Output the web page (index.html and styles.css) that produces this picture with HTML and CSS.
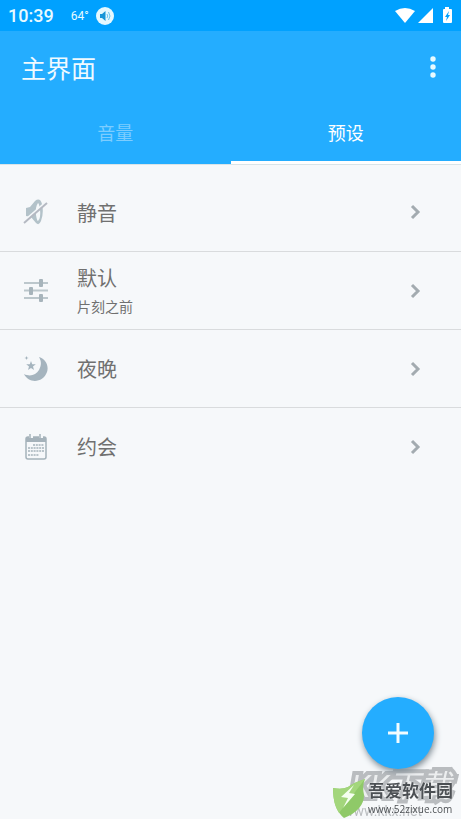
FILE: index.html
```html
<!DOCTYPE html>
<html lang="zh-CN">
<head>
<meta charset="utf-8">
<meta name="viewport" content="width=device-width, initial-scale=1">
<title>主界面</title>
<link rel="stylesheet" href="styles.css">
</head>
<body>
<div class="status">
  <span class="clock">10:39</span>
  <span class="temp">64°</span>
  <svg class="sound" viewBox="0 0 18 18" aria-hidden="true"><circle cx="9" cy="9" r="9" fill="#e4f8ff"/><path d="M4 7h2l3.500-3v10L6 11H4z" fill="#1795d8"/><path d="M11 7q1.500 2 0 4M12.500 5q3 4 0 8" fill="none" stroke="#6cc4ee"/></svg>
  <svg class="signals" viewBox="0 0 60 20" aria-hidden="true"><path d="M1 5Q11-1 21 5L11 17z"/><path d="M39 2v15H24z"/><path fill-rule="evenodd" d="M51 1h4v2h2q1 0 1 1v12q0 1-1 1h-7q-1 0-1-1V4q0-1 1-1h1zM55 5l-4 6h2l-1 4 4-6h-2z"/></svg>
</div>
<header class="header">
  <div class="bar">
    <h1 class="title">主界面</h1>
    <button class="more" aria-label="更多选项"><svg viewBox="0 0 6 22" aria-hidden="true"><circle cx="3" cy="3" r="2.700"/><circle cx="3" cy="11" r="2.700"/><circle cx="3" cy="19" r="2.700"/></svg></button>
  </div>
  <nav class="tabs">
    <a class="tab" href="#volume">音量</a>
    <a class="tab active" href="#presets" aria-current="page">预设</a>
  </nav>
</header>
<main class="content">
  <ul class="list">
    <li class="item"><a class="row" href="#mute">
      <svg class="icon" viewBox="0 0 26 26" aria-hidden="true"><path d="M3 9l4-1 5-6q5-4 7 3 2 9-1 17-2 5-5 2l-5-6-5-1z" fill="#b3c2c9"/><path d="M15 4q-3 4-2 12 1 6 2 6 3-3 2-12-1-6-2-6z" fill="#f5f8fa"/><path d="M1 22L23 3" stroke="#f5f8fa" stroke-width="2"/><path d="M1 24L24 4" stroke="#b5b9c2" stroke-width="2"/></svg>
      <span class="text"><span class="name">静音</span></span>
      <svg class="chevron" viewBox="0 0 12 18" aria-hidden="true"><path d="M2 3l6 6-6 6"/></svg>
    </a></li>
    <li class="item"><a class="row" href="#default">
      <svg class="icon" viewBox="0 0 26 26" aria-hidden="true"><path d="M1 5h24M1 12.500h24M1 20h24" stroke="#bcc7cc" stroke-width="2"/><rect x="16" y="1" width="4" height="8" rx="1" fill="#a7b4bb"/><rect x="6" y="9" width="4" height="8" rx="1" fill="#a7b4bb"/><rect x="16" y="16" width="4" height="8" rx="1" fill="#a7b4bb"/></svg>
      <span class="text"><span class="name">默认</span><span class="note">片刻之前</span></span>
      <svg class="chevron" viewBox="0 0 12 18" aria-hidden="true"><path d="M2 3l6 6-6 6"/></svg>
    </a></li>
    <li class="item"><a class="row" href="#night">
      <svg class="icon" viewBox="0 0 26 26" aria-hidden="true"><g fill="#a5b4be"><path d="M16 1C23 3 26 10 24 16 20 27 6 28 1 18c6 3 12 1 15-4 2-4 3-8 0-13z"/><path d="M8 5l1.200 3.300h3.600L10 10.500l1 3.500-3-2-3 2 1-3.500-2.800-2.200h3.600z"/><path d="M3.500 0l.6 1.400 1.500.6-1.500.6-.6 1.400-.6-1.400L1.400 2l1.500-.6z"/></g></svg>
      <span class="text"><span class="name">夜晚</span></span>
      <svg class="chevron" viewBox="0 0 12 18" aria-hidden="true"><path d="M2 3l6 6-6 6"/></svg>
    </a></li>
    <li class="item"><a class="row" href="#date">
      <svg class="icon" viewBox="0 0 26 26" aria-hidden="true"><rect x="3" y="3" width="20" height="22" rx="2" fill="none" stroke="#a5b2ba" stroke-width="1.500"/><path d="M3 3h20v5H3z" fill="#a5b2ba"/><path d="M8 0v4M18 0v4" stroke="#f5f8fa" stroke-width="4"/><path d="M7 0v4M17 0v4" stroke="#a5b2ba" stroke-width="1.500"/><path d="M10 11h11M5 14h16M5 17h16M5 21h11" stroke="#a5b2ba" stroke-width="1.600" stroke-dasharray="2 .800"/></svg>
      <span class="text"><span class="name">约会</span></span>
      <svg class="chevron" viewBox="0 0 12 18" aria-hidden="true"><path d="M2 3l6 6-6 6"/></svg>
    </a></li>
  </ul>
</main>
<div class="mark-back"><span class="mark-big">KK下载</span><span class="mark-url">www.kkx.net</span></div>
<button class="fab" aria-label="添加预设"><svg viewBox="0 0 22 22" aria-hidden="true"><path d="M11 1v20M1 11h20"/></svg></button>
<div class="mark">
  <svg class="shield" viewBox="0 0 34 40" aria-hidden="true"><path d="M1 9q9 2 15-1 7-5 17-8-3 7-1 16 0 15-20 23Q1 30 1 9z" fill="#8fc968"/><path d="M1 9q9 2 15-1 7-5 17-8L7 34Q1 26 1 9z" fill="#a3d67c"/><path d="M22 6L9 18l7 1-5 10 12-14-6-1z" fill="#f5fff0"/></svg>
  <div class="mark-text"><span class="mark-name">吾爱软件园</span><span class="mark-site">www.52zixue.com</span></div>
</div>
</body>
</html>
```
FILE: styles.css
```css
* { box-sizing: border-box; }
body {
  margin: 0;
  min-height: 100vh;
  background: #f6f8fa;
  color: #707070;
  font-family: Roboto, "Noto Sans CJK SC", sans-serif;
}
a { color: inherit; text-decoration: none; }
button { border: 0; padding: 0; background: none; cursor: pointer; }
svg { display: block; flex: none; }

.status {
  display: flex;
  align-items: center;
  height: 31px;
  padding: 0 7px 0 8px;
  background: #00a1ff;
  color: #e8faff;
}
.clock { font-size: 18px; font-weight: 500; }
.temp { margin-left: 17px; font-size: 12px; }
.sound { width: 18px; height: 18px; margin-left: 7px; }
.signals { width: 60px; height: 20px; margin-left: auto; fill: #fff; }

.header { background: #24adff; color: #fff; }
.bar {
  display: flex;
  align-items: center;
  justify-content: space-between;
  height: 71px;
  padding: 0 16px 0 21px;
}
.title { margin: 0; font-size: 25px; font-weight: 400; color: #f0faff; }
.more { display: flex; justify-content: center; width: 24px; }
.more svg { width: 6px; height: 22px; fill: #e8faff; }
.tabs { display: flex; }
.tab {
  flex: 1;
  height: 62px;
  border-bottom: 3px solid transparent;
  line-height: 64px;
  text-align: center;
  font-size: 18px;
  color: #7dcdff;
}
.tab.active { border-color: #fff; color: #fff; }

.content { border-top: 1px solid #d9e4e8; padding-top: 8px; }
.list { margin: 0; padding: 0; list-style: none; }
.item + .item { border-top: 1px solid #d9dbdd; }
.row {
  display: flex;
  align-items: center;
  height: 78px;
  padding: 0 39px 0 23px;
}
.item + .item .row { height: 77px; }
.icon { width: 26px; height: 26px; }
.text { display: flex; flex: 1; flex-direction: column; margin-left: 28px; padding-top: 3px; }
.name { font-size: 20px; line-height: 30px; }
.note { font-size: 14px; line-height: 26px; }
.chevron { width: 12px; height: 18px; fill: none; stroke: #a3abb0; stroke-width: 3; }

.fab {
  position: fixed;
  right: 27px;
  bottom: 50px;
  display: grid;
  place-items: center;
  width: 72px;
  height: 72px;
  border-radius: 50%;
  background: #24adff;
  box-shadow: 1px 3px 6px #7d8b94;
}
.fab svg { width: 22px; height: 22px; stroke: #f2fcff; stroke-width: 3; }

.mark-back {
  position: fixed;
  right: 2px;
  bottom: 0;
  display: flex;
  flex-direction: column;
  width: 116px;
  color: #eceeef;
}
.mark-big {
  font-size: 31px;
  font-style: italic;
  line-height: 32px;
  text-align: center;
  -webkit-text-stroke: 8px #b9bcbf;
  paint-order: stroke fill;
}
.mark-url { color: #b9bcbf; font-size: 14px; line-height: 16px; }
.mark {
  position: fixed;
  right: 8px;
  bottom: 0;
  display: flex;
  align-items: center;
  gap: 2px;
}
.shield { width: 34px; height: 40px; }
.mark-text { display: flex; flex-direction: column; color: #4c5054; text-shadow: 0 0 2px #fff; }
.mark-name { font-size: 17px; font-weight: 700; line-height: 20px; }
.mark-site { font-family: "Open Sans", sans-serif; font-size: 10px; line-height: 16px; }
```
